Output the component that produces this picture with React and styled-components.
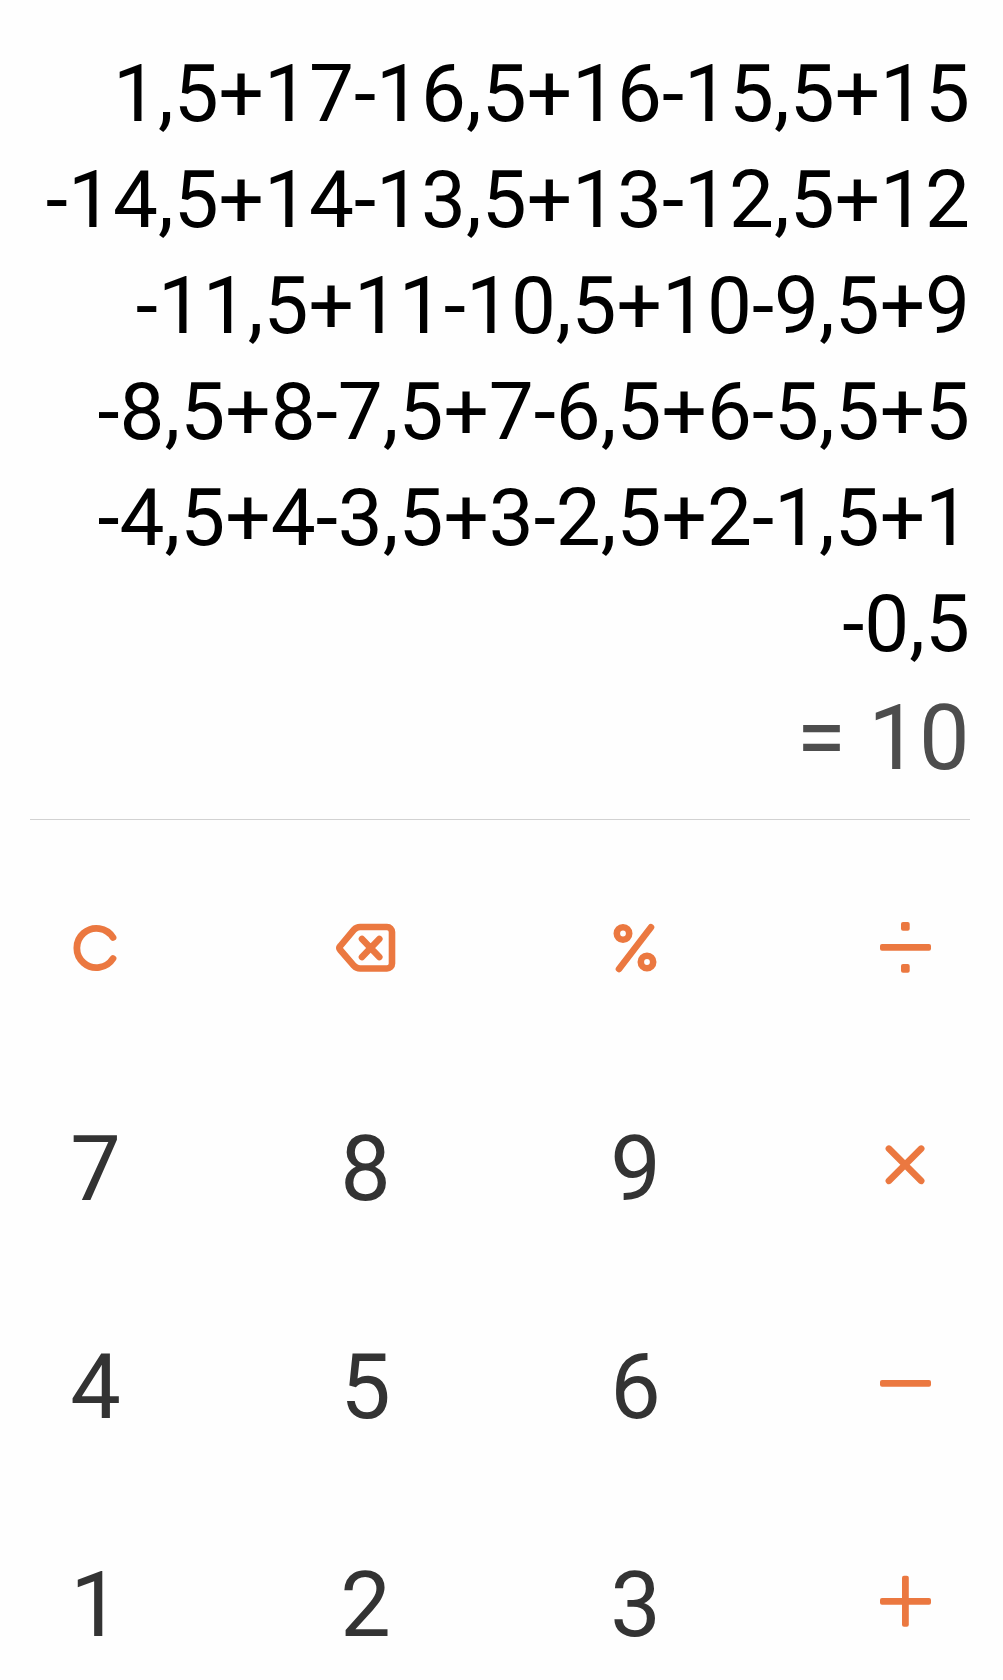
import React from "react";
import styled, { createGlobalStyle } from "styled-components";

const GlobalStyle = createGlobalStyle`
  body {
    margin: 0;
    background: #fefefe;
  }
`;

const Screen = styled.div`
  display: flex;
  flex-direction: column;
  box-sizing: border-box;
  height: 1680px;
  padding-top: 41px;
  overflow: hidden;
  background: #fefefe;
  font-family: Roboto, sans-serif;
`;

const Display = styled.div`
  margin: 0 33px 19px 30px;
  text-align: right;
  white-space: nowrap;
`;

const ExpressionLine = styled.div`
  font-size: 80px;
  line-height: 106px;
  color: #000;
`;

const Result = styled.div`
  padding-right: 0.5px;
  font-size: 90px;
  line-height: 123px;
  color: #4d4d4d;
`;

const Divider = styled.hr`
  flex: none;
  width: 940px;
  height: 1px;
  margin: 0 0 18px 30px;
  border: 0;
  background: #d2d2d2;
`;

const Keypad = styled.div`
  display: grid;
  flex: none;
  grid-template-columns: repeat(4, 190px);
  grid-auto-rows: 218px;
  column-gap: 80px;
`;

const Key = styled.button`
  display: flex;
  align-items: center;
  justify-content: center;
  padding: ${({ $digit }) => ($digit ? "9px 0 0 1px" : "0")};
  border: 0;
  background: none;
  font-family: inherit;
  font-size: 90px;
  color: ${({ $digit }) => ($digit ? "#333" : "#eb7840")};
`;

const Icon = styled.svg`
  width: 100px;
  height: 100px;
  fill: none;
  stroke: currentColor;
  stroke-width: 6.6;
  stroke-linecap: round;
  stroke-linejoin: round;
`;

const Solid = styled.rect`
  fill: currentColor;
  stroke: none;
`;

const icons = {
  clear: <path d="M68 40.5A19.6 19.6 0 1 0 68 61.5" strokeWidth="6.8" />,
  backspace: (
    <>
      <path d="M45 30H72a5 5 0 0 1 5 5V66.5a5 5 0 0 1-5 5H45Q41.5 71.5 39 68.8L25.3 53Q23.5 51 25.3 49L39 32.7Q41.5 30 45 30Z" />
      <path d="M47 42L64.3 60M64.3 42L47 60" />
    </>
  ),
  percent: (
    <>
      <circle cx="38" cy="36.5" r="6.2" />
      <circle cx="62" cy="65" r="6.2" />
      <path d="M34 72L66 30.3" />
    </>
  ),
  divide: (
    <>
      <Solid x="46" y="25" width="8.7" height="8.7" rx="2" />
      <Solid x="25" y="47" width="51" height="6.8" rx="2" />
      <Solid x="46" y="67" width="8.7" height="8.7" rx="2" />
    </>
  ),
  multiply: <path d="M33.9 33.7L66.2 65.8M66.2 33.7L33.9 65.8" />,
  minus: <Solid x="25" y="47" width="51" height="6.8" rx="2" />,
  plus: (
    <>
      <Solid x="25" y="47" width="51" height="6.8" rx="2" />
      <Solid x="47" y="24.7" width="6.8" height="51" rx="2" />
    </>
  ),
};

const expression = [
  "1,5+17-16,5+16-15,5+15",
  "-14,5+14-13,5+13-12,5+12",
  "-11,5+11-10,5+10-9,5+9",
  "-8,5+8-7,5+7-6,5+6-5,5+5",
  "-4,5+4-3,5+3-2,5+2-1,5+1",
  "-0,5",
];

const keys = [
  "clear", "backspace", "percent", "divide",
  "7", "8", "9", "multiply",
  "4", "5", "6", "minus",
  "1", "2", "3", "plus",
];

const App = () => (
  <Screen>
    <GlobalStyle />
    <Display>
      {expression.map(line => (
        <ExpressionLine key={line}>{line}</ExpressionLine>
      ))}
      <Result>= 10</Result>
    </Display>
    <Divider />
    <Keypad>
      {keys.map(name => (
        <Key key={name} $digit={!icons[name]}>
          {icons[name] ? <Icon viewBox="0 0 100 100">{icons[name]}</Icon> : name}
        </Key>
      ))}
    </Keypad>
  </Screen>
);

export default App;
